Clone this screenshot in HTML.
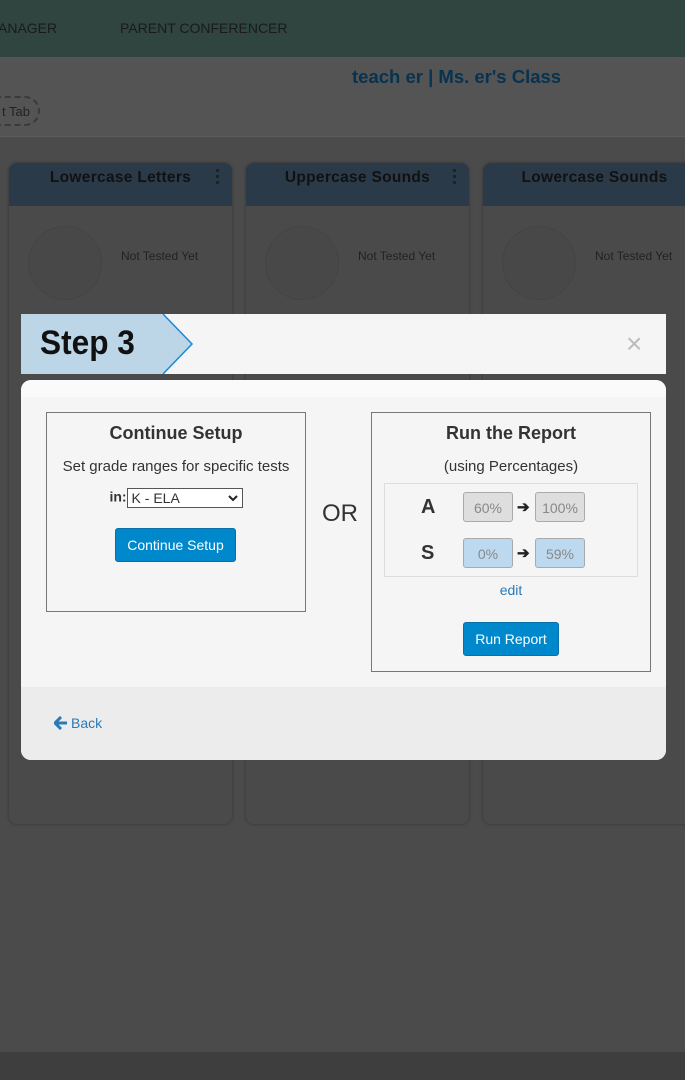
<!DOCTYPE html>
<html><head><style>
*{box-sizing:border-box;margin:0;padding:0}
body{width:685px;height:1080px;background:#4b4b4b;font-family:"Liberation Sans",sans-serif;position:relative;overflow:hidden}
.top{position:absolute;left:0;top:0;width:685px;height:57px;background:#30453f;color:#1a1a1a;font-size:14px}
.top span{position:absolute;top:20px}
.sub{position:absolute;left:0;top:57px;width:685px;height:80px;background:#545454;border-bottom:1px solid #5c5c5c}
.title{position:absolute;left:352px;top:66px;color:#073250;font-size:18.5px;font-weight:bold}
.tab{position:absolute;left:-20px;top:96px;width:60px;height:30px;border:2px dashed #3a3a3a;border-radius:15px;font-size:13px;color:#222;padding:6px 0 0 20px}
.card{position:absolute;width:223px;height:225px;background:#4a4a4a;border-radius:8px;box-shadow:0 0 3px #333;overflow:hidden}
.card .h{height:43px;background:#2b3a48;color:#111;font-size:15.5px;font-weight:bold;text-align:center;padding-top:6px;letter-spacing:0.3px}
.card .c{position:absolute;left:19px;top:63px;width:74px;height:74px;border-radius:50%;border:1px solid #444;background:#484848}
.card .n{position:absolute;left:112px;top:86px;font-size:12px;color:#222}
.bot{position:absolute;left:0;top:1052px;width:685px;height:28px;background:#3e3e3e}
.step{position:absolute;left:21px;top:314px;width:645px;height:60px;background:#f5f5f5}
.modal{position:absolute;left:21px;top:380px;width:645px;height:380px;background:#f5f5f5;border-radius:10px;overflow:hidden}
.box{position:absolute;border:1px solid #777;text-align:center;color:#333}
.box h3{font-size:18px;margin-top:10px}
.btn{position:absolute;background:#0088cc;color:#fff;font-size:14px;border-radius:3px;border:1px solid #0a6fa6;text-align:center;padding-top:8px}
.pct{position:absolute;width:50px;height:30px;border:1px solid #aaa;border-radius:3px;font-size:14px;color:#888;text-align:center;padding-top:7px}
.g{background:#dedede}.b{background:#bcd9f0}
.lt{position:absolute;font-size:20px;font-weight:bold;color:#333}
.ar{position:absolute;font-size:15px;color:#222;font-weight:bold}
.keb{position:absolute;width:3px;height:15px}
.keb i{display:block;width:3px;height:3px;background:#222;margin-bottom:3px}
</style></head><body>
<div class="top"><span style="left:-2px">ANAGER</span><span style="left:120px">PARENT CONFERENCER</span></div>
<div class="sub"></div>
<div class="title">teach er | Ms. er's Class</div>
<div class="tab">t Tab</div>

<div class="card" style="left:9px;top:163px;height:661px"><div class="h">Lowercase Letters</div><div class="c"></div><div class="n">Not Tested Yet</div></div>
<div class="card" style="left:246px;top:163px;height:661px"><div class="h">Uppercase Sounds</div><div class="c"></div><div class="n">Not Tested Yet</div></div>
<div class="card" style="left:483px;top:163px;height:661px;width:230px"><div class="h" style="width:223px">Lowercase Sounds</div><div class="c"></div><div class="n">Not Tested Yet</div></div>
<div class="keb" style="left:216px;top:169px"><i></i><i></i><i></i></div>
<div class="keb" style="left:453px;top:169px"><i></i><i></i><i></i></div>
<div class="bot"></div>

<div class="step">
<svg width="175" height="60" style="position:absolute;left:0;top:0"><polygon points="0,0 142,0 171,30 142,60 0,60" fill="#bcd6e8"/><polyline points="142,0 171,30 142,60" fill="none" stroke="#1a8ad4" stroke-width="1.5"/></svg>
<div style="position:absolute;left:19px;top:10px;font-size:34px;font-weight:bold;color:#111;transform:scaleX(0.93);transform-origin:left">Step 3</div>
<div style="position:absolute;left:605px;top:14px;font-size:28px;color:#bbb">×</div>
</div>

<div class="modal">
<div style="height:17px;background:#fafafa"></div>
<div class="box" style="left:25px;top:32px;width:260px;height:200px">
<h3>Continue Setup</h3>
<div style="font-size:15px;margin-top:14px">Set grade ranges for specific tests</div>
<div style="margin-top:13px;font-size:14px"><b>in:</b><span style="display:inline-block;width:116px;height:20px;border:1px solid #555;background:#fff;text-align:left;padding:1px 4px;vertical-align:middle;font-size:14px;position:relative">K - ELA<svg width="10" height="8" style="position:absolute;right:4px;top:6px"><polyline points="1,1 5,5 9,1" fill="none" stroke="#222" stroke-width="2"/></svg></span></div>
<div class="btn" style="left:68px;top:115px;width:121px;height:34px">Continue Setup</div>
</div>
<div style="position:absolute;left:301px;top:120px;font-size:24px;color:#333">OR</div>
<div class="box" style="left:350px;top:32px;width:280px;height:260px">
<h3>Run the Report</h3>
<div style="font-size:15px;margin-top:14px">(using Percentages)</div>
<div style="position:absolute;left:12px;top:70px;width:254px;height:94px;border:1px solid #ddd"></div>
<div class="lt" style="left:49px;top:83px">A</div>
<div class="pct g" style="left:91px;top:79px">60%</div><div class="ar" style="left:145px;top:85px">➔</div><div class="pct g" style="left:163px;top:79px">100%</div>
<div class="lt" style="left:49px;top:129px">S</div>
<div class="pct b" style="left:91px;top:125px">0%</div><div class="ar" style="left:145px;top:131px">➔</div><div class="pct b" style="left:163px;top:125px">59%</div>
<div style="position:absolute;left:0;width:100%;top:169px;font-size:14px;color:#2a7ab8">edit</div>
<div class="btn" style="left:91px;top:209px;width:96px;height:34px">Run Report</div>
</div>
<div style="position:absolute;left:0;top:307px;width:645px;height:73px;background:#ececec"></div>
<svg width="14" height="14" style="position:absolute;left:33px;top:336px"><path d="M7 1 L1 7 L7 13 M1 7 H13" fill="none" stroke="#2a7ab8" stroke-width="3"/></svg>
<div style="position:absolute;left:50px;top:335px;font-size:14px;color:#2a7ab8">Back</div>
</div>
</body></html>
